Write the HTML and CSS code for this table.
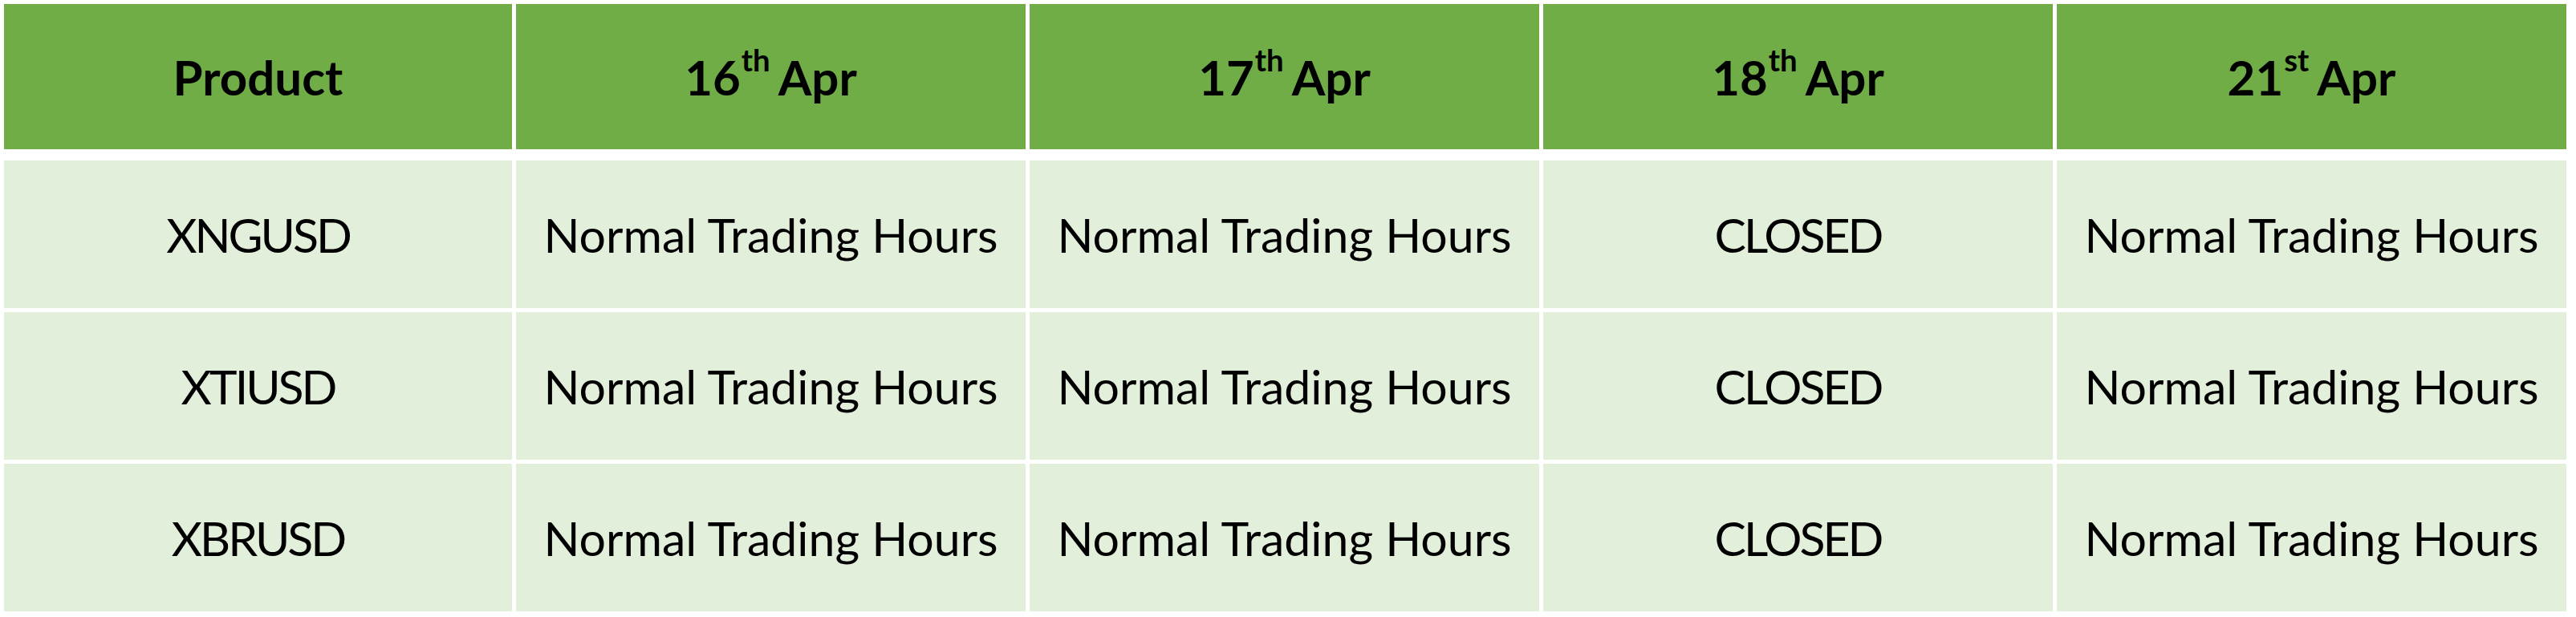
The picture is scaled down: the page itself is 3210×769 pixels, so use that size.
FILE: index.html
```html
<!DOCTYPE html>
<html lang="en">
<head>
<meta charset="utf-8">
<title>Trading Hours</title>
<link rel="stylesheet" href="styles.css">
</head>
<body>
<div class="table">
  <div class="row head">
    <div class="cell">Product</div>
    <div class="cell">16<sup>th</sup> Apr</div>
    <div class="cell">17<sup>th</sup> Apr</div>
    <div class="cell">18<sup>th</sup> Apr</div>
    <div class="cell">21<sup>st</sup> Apr</div>
  </div>
  <div class="body">
    <div class="row">
      <div class="cell caps">XNGUSD</div>
      <div class="cell">Normal Trading Hours</div>
      <div class="cell">Normal Trading Hours</div>
      <div class="cell caps">CLOSED</div>
      <div class="cell">Normal Trading Hours</div>
    </div>
    <div class="row">
      <div class="cell caps">XTIUSD</div>
      <div class="cell">Normal Trading Hours</div>
      <div class="cell">Normal Trading Hours</div>
      <div class="cell caps">CLOSED</div>
      <div class="cell">Normal Trading Hours</div>
    </div>
    <div class="row">
      <div class="cell caps">XBRUSD</div>
      <div class="cell">Normal Trading Hours</div>
      <div class="cell">Normal Trading Hours</div>
      <div class="cell caps">CLOSED</div>
      <div class="cell">Normal Trading Hours</div>
    </div>
  </div>
</div>
</body>
</html>
```

FILE: styles.css
```css
html, body {
  margin: 0;
  padding: 0;
  background: #ffffff;
}

body {
  font-family: Lato, "Open Sans", "Liberation Sans", sans-serif;
  color: #000000;
}

.table {
  display: flex;
  flex-direction: column;
  padding: 5px 0 0 5px;
  width: 3193px;
}

.row {
  display: grid;
  grid-template-columns: 633px repeat(4, 635px);
  column-gap: 5px;
  height: 184px;
}

.head {
  height: 181px;
  margin-bottom: 14px;
}

.body {
  display: flex;
  flex-direction: column;
  row-gap: 5px;
}

.cell {
  display: flex;
  align-items: center;
  justify-content: center;
  background: #e2efda;
  font-size: 59px;
  line-height: 1;
  white-space: nowrap;
}

.caps {
  letter-spacing: -3px;
}

.head .cell {
  background: #70ad47;
  font-weight: 700;
  font-size: 60px;
}

sup {
  font-size: 0.64em;
  line-height: 0;
  vertical-align: 0;
  position: relative;
  top: -0.55em;
  margin-left: 1px;
  margin-right: 10px;
}
```
